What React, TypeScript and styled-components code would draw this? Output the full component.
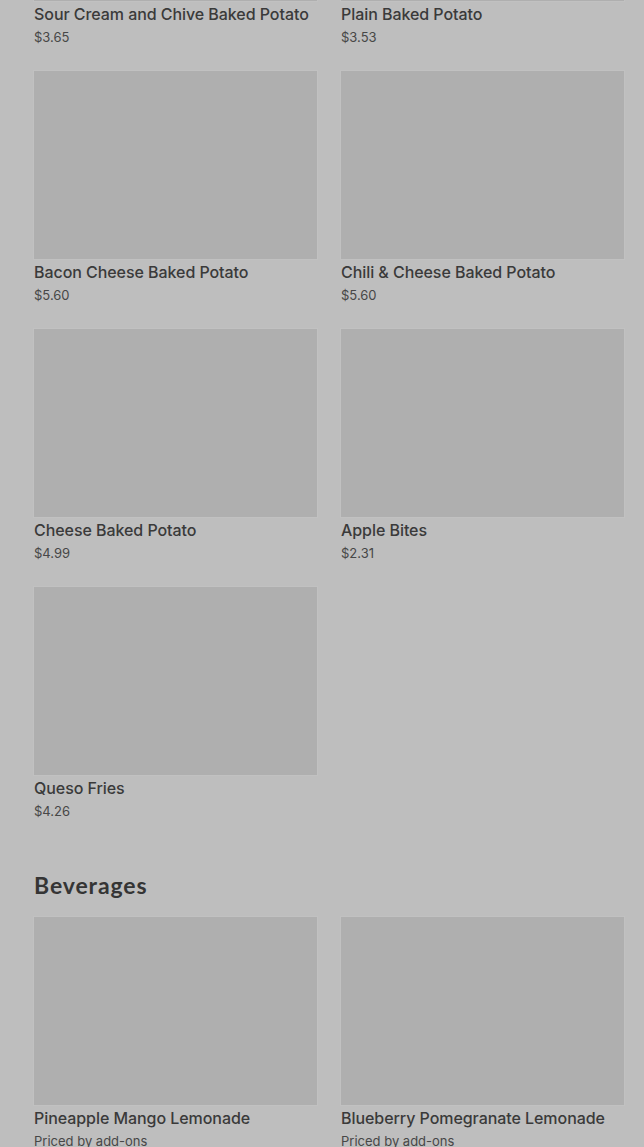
import styled, { createGlobalStyle } from 'styled-components';

const GlobalStyle = createGlobalStyle`
  html, body {
    margin: 0;
    padding: 0;
    background: #bebebe;
    overflow: hidden;
  }
  body {
    font-family: Inter, "Noto Sans", sans-serif;
  }
`;

type Item = { name: string; price: string };

const potatoes: Item[] = [
  { name: 'Sour Cream and Chive Baked Potato', price: '$3.65' },
  { name: 'Plain Baked Potato', price: '$3.53' },
  { name: 'Bacon Cheese Baked Potato', price: '$5.60' },
  { name: 'Chili & Cheese Baked Potato', price: '$5.60' },
  { name: 'Cheese Baked Potato', price: '$4.99' },
  { name: 'Apple Bites', price: '$2.31' },
  { name: 'Queso Fries', price: '$4.26' },
];

const beverages: Item[] = [
  { name: 'Pineapple Mango Lemonade', price: 'Priced by add-ons' },
  { name: 'Blueberry Pomegranate Lemonade', price: 'Priced by add-ons' },
];

// the menu is scrolled: the first row's pictures sit just above the window
const Page = styled.div`
  display: flex;
  flex-direction: column;
  padding: 0 20px 0 34px;
  margin-top: -187px;
  height: 1334px;
  overflow: hidden;
`;

const Grid = styled.div`
  display: grid;
  grid-template-columns: 283px 283px;
  column-gap: 24px;
  row-gap: 26px;
`;

const Card = styled.div`
  display: flex;
  flex-direction: column;
`;

const Thumb = styled.div`
  height: 188px;
  background: #afafaf;
  box-shadow: 0 0 0 1px rgba(255, 255, 255, 0.06);
`;

const Title = styled.div`
  margin-top: 1px;
  font-size: 16px;
  line-height: 24px;
  font-weight: 500;
  letter-spacing: -0.06px;
  color: #3a3a3a;
  white-space: nowrap;
`;

const Price = styled.div`
  margin-top: 3px;
  font-size: 13px;
  line-height: 16px;
  color: #474747;
`;

const Heading = styled.h2`
  margin: 51px 0 17px;
  font-family: Lato, Inter, sans-serif;
  font-size: 23px;
  line-height: 30px;
  font-weight: 700;
  letter-spacing: 0.9px;
  color: #353535;
`;

function MenuCard({ name, price }: Item) {
  return (
    <Card>
      <Thumb />
      <Title>{name}</Title>
      <Price>{price}</Price>
    </Card>
  );
}

export default function App() {
  return (
    <>
      <GlobalStyle />
      <Page>
        <Grid>
          {potatoes.map((item) => (
            <MenuCard key={item.name} {...item} />
          ))}
        </Grid>
        <Heading>Beverages</Heading>
        <Grid>
          {beverages.map((item) => (
            <MenuCard key={item.name} {...item} />
          ))}
        </Grid>
      </Page>
    </>
  );
}
